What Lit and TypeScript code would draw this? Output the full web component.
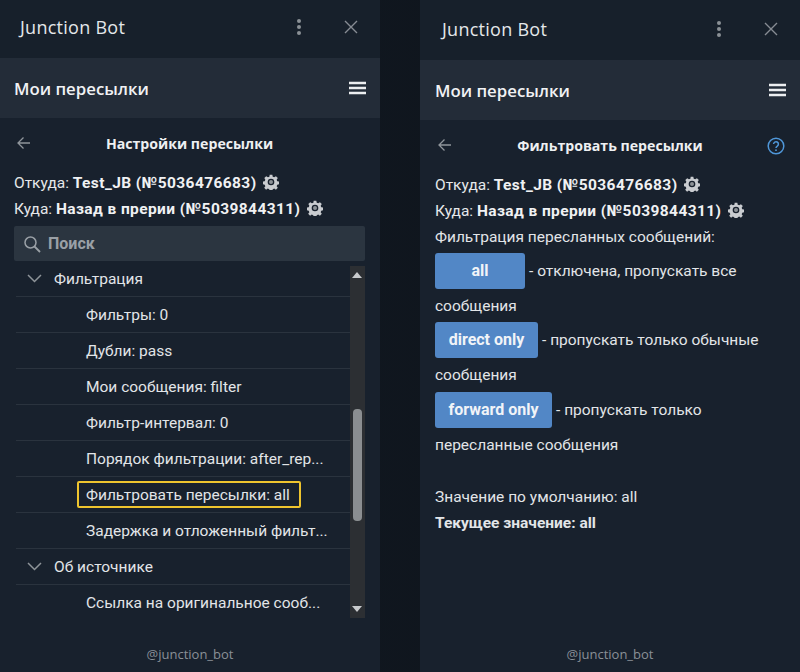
import { LitElement, html, css, svg } from "lit";
import { customElement, property } from "lit/decorators.js";

const gear = svg`<svg class="gear" width="16" height="16" viewBox="0 0 24 24"><path fill="#c9ccd0" fill-rule="evenodd" d="M10 1h4l.6 3 2.2.9 2.6-1.7 2.8 2.8-1.7 2.6.9 2.2 3 .6v4l-3 .6-.9 2.2 1.7 2.6-2.8 2.8-2.6-1.7-2.2.9-.6 3h-4l-.6-3-2.2-.9-2.6 1.7-2.8-2.8 1.7-2.6-.9-2.2-3-.6v-4l3-.6.9-2.2L2 6l2.800-2.800 2.600 1.700 2.200-.9zM12 7a5 5 0 1 0 0 10 5 5 0 0 0 0-10z"/><circle cx="12" cy="12" r="3" fill="#8d9297"/></svg>`;

@customElement("bot-panel")
class BotPanel extends LitElement {
  @property({ type: Boolean, reflect: true }) shifted = false;
  @property() heading = "";
  @property({ type: Boolean }) help = false;

  static styles = css`
    :host { display: flex; flex-direction: column; width: 380px; height: 672px; background: #18212d; color: #e8eaec; font-family: Roboto, sans-serif; font-size: 15.5px; }
    .top { height: 58px; display: flex; align-items: center; padding: 0 20px 4px; box-sizing: border-box; background: #17202b; }
    :host([shifted]) .top { height: 60px; padding: 0 20px 2px 22px; }
    .name { flex: 1; font-family: "Open Sans", sans-serif; font-size: 18px; color: #e4e7ea; letter-spacing: 0.27px; }
    .dots { margin-right: 42px; display: block; }
    .close { margin-right: 2px; display: block; }
    .sub { height: 60px; background: #232c38; display: flex; align-items: center; justify-content: space-between; padding: 0 14px; box-sizing: border-box; font-family: "Open Sans", sans-serif; font-weight: 600; font-size: 16.8px; color: #f1f2f4; }
    :host([shifted]) .sub { padding-left: 15px; }
    .body { flex: 1; padding: 0 15px 0 14px; min-height: 0; display: flex; flex-direction: column; }
    :host([shifted]) .body { padding-left: 15px; }
    .title { height: 52px; display: flex; align-items: center; position: relative; justify-content: center; font-family: "Open Sans", sans-serif; font-weight: 700; font-size: 14.15px; color: #eef0f2; padding-bottom: 1px; box-sizing: border-box; }
    .title .back { position: absolute; left: 3px; top: 18px; }
    .title .q { position: absolute; right: 0; top: 17px; }
    .foot { height: 36px; text-align: center; font-family: "Open Sans", sans-serif; font-size: 13px; color: #8a9097; padding-top: 9px; box-sizing: border-box; }
  `;

  render() {
    return html`
      <div class="top">
        <span class="name">Junction Bot</span>
        <svg class="dots" width="6" height="18" viewBox="0 0 6 18"><circle cx="3" cy="3" r="2" fill="#8b9096"/><circle cx="3" cy="9" r="2" fill="#8b9096"/><circle cx="3" cy="15" r="2" fill="#8b9096"/></svg>
        <svg class="close" width="14" height="14" viewBox="0 0 14 14"><path d="M1 1l12 12M13 1L1 13" stroke="#878c93" stroke-width="1.4" fill="none"/></svg>
      </div>
      <div class="sub">
        <span>Мои пересылки</span>
        <svg width="17" height="14" viewBox="0 0 17 14"><path d="M0 2h17M0 7h17M0 12h17" stroke="#eceef0" stroke-width="2.400"/></svg>
      </div>
      <div class="body">
        <div class="title">
          <svg class="back" width="13" height="14" viewBox="0 0 13 14"><path d="M13 7H1M6.500 1.500L1 7l5.500 5.500" stroke="#8f959b" stroke-width="1.300" fill="none"/></svg>
          <span>${this.heading}</span>
          ${this.help ? html`<svg class="q" width="18" height="18" viewBox="0 0 18 18"><circle cx="9" cy="9" r="7.800" stroke="#4f97d9" stroke-width="1.500" fill="none"/><path d="M6.600 7.100a2.400 2.400 0 1 1 3.700 2c-.9.6-1.300 1-1.300 2" stroke="#4f97d9" stroke-width="1.500" fill="none"/><circle cx="9" cy="13.200" r=".9" fill="#4f97d9"/></svg>` : ""}
        </div>
        <slot></slot>
      </div>
      <div class="foot">@junction_bot</div>
    `;
  }
}

@customElement("route-info")
class RouteInfo extends LitElement {
  static styles = css`
    :host { display: block; line-height: 26px; font-size: 15.5px; color: #e6e8ea; }
    b { font-weight: 700; color: #f0f1f3; letter-spacing: 0.4px; }
    .gear { vertical-align: -2px; margin-left: 3px; }
    .row { height: 26px; white-space: nowrap; }
  `;
  render() {
    return html`
      <div class="row">Откуда: <b>Test_JB (№5036476683)</b> ${gear}</div>
      <div class="row">Куда: <b>Назад в прерии (№5039844311)</b> ${gear}</div>
    `;
  }
}

@customElement("app-root")
class AppRoot extends LitElement {
  static styles = css`
    :host { display: flex; justify-content: space-between; width: 800px; height: 672px; background: linear-gradient(90deg, #131b25, #0f151d 60%, #131b25); overflow: hidden; }
    .search { height: 35px; margin-top: 4px; background: #2b3540; border-radius: 2px; display: flex; align-items: center; padding-left: 9px; gap: 7px; font-family: Roboto, sans-serif; font-weight: 700; font-size: 16px; color: #9aa0a6; }
    .listwrap { position: relative; height: 360px; overflow: hidden; }
    .list { width: 335px; margin-left: 2px; }
    .rowi { height: 36px; box-sizing: border-box; border-bottom: 1px solid #2a333e; display: flex; align-items: center; font-size: 15.5px; color: #e2e5e8; white-space: nowrap; }
    .child { padding-left: 70px; }
    .group { padding-left: 11px; }
    .group svg { margin-right: 12px; }
    .sel { border: 2px solid #eec42e; border-radius: 2px; height: 27px; box-sizing: border-box; display: flex; align-items: center; padding: 0 9px 0 7px; margin-left: -9px; }
    .nob { border-bottom: 0; }
    .bar { position: absolute; right: 0; top: 5px; width: 15px; height: 352px; background: #2c2f33; }
    .arr { position: absolute; left: 2px; width: 0; height: 0; border-left: 5.500px solid transparent; border-right: 5.500px solid transparent; }
    .up { top: 6px; border-bottom: 6px solid #c8cacc; }
    .down { bottom: 6px; border-top: 6px solid #c8cacc; }
    .thumb { position: absolute; left: 3px; top: 143px; width: 9px; height: 112px; border-radius: 4px; background: #8b8e91; }
    .text { line-height: 26px; font-size: 15.5px; color: #e2e5e8; font-family: Roboto, sans-serif; }
    .line { height: 26px; white-space: nowrap; }
    .lead { height: 25px; }
    .entry { padding-top: 3.500px; }
    .btnrow { height: 36px; display: flex; align-items: center; gap: 4px; white-space: nowrap; margin-bottom: 4px; }
    .btn { height: 36px; box-sizing: border-box; background: #5287c6; border-radius: 3px; color: #f1f4f8; font-weight: 700; font-size: 16px; display: flex; align-items: center; justify-content: center; }
    .spacer { height: 26px; }
    b { font-weight: 700; }
  `;

  private chev() {
    return html`<svg width="15" height="9" viewBox="0 0 15 9"><path d="M1 1l6.500 6.500L14 1" stroke="#8e9499" stroke-width="1.500" fill="none"/></svg>`;
  }

  private left() {
    const child = (t: string) => html`<div class="rowi child">${t}</div>`;
    const group = (t: string) => html`<div class="rowi group">${this.chev()}<span>${t}</span></div>`;
    return html`
      <bot-panel heading="Настройки пересылки">
        <route-info></route-info>
        <div class="search">
          <svg width="18" height="18" viewBox="0 0 18 18"><circle cx="7.500" cy="7.500" r="5.500" stroke="#9aa0a6" stroke-width="1.500" fill="none"/><path d="M11.500 11.500l5.500 5.500" stroke="#9aa0a6" stroke-width="1.800"/></svg>
          <span>Поиск</span>
        </div>
        <div class="listwrap">
          <div class="list">
            ${group("Фильтрация")}
            ${child("Фильтры: 0")}
            ${child("Дубли: pass")}
            ${child("Мои сообщения: filter")}
            ${child("Фильтр-интервал: 0")}
            ${child("Порядок фильтрации: after_rep...")}
            <div class="rowi child"><span class="sel">Фильтровать пересылки: all</span></div>
            ${child("Задержка и отложенный фильт...")}
            ${group("Об источнике")}
            <div class="rowi child nob">Ссылка на оригинальное сооб...</div>
          </div>
          <div class="bar"><span class="arr up"></span><div class="thumb"></div><span class="arr down"></span></div>
        </div>
      </bot-panel>
    `;
  }

  private entry(label: string, w: number, text: string, wrap: string) {
    return html`
      <div class="entry">
        <div class="btnrow"><span class="btn" style="width:${w}px">${label}</span><span>${text}</span></div>
        <div class="line">${wrap}</div>
      </div>`;
  }

  private right() {
    return html`
      <bot-panel shifted help heading="Фильтровать пересылки">
        <route-info></route-info>
        <div class="text">
          <div class="line lead">Фильтрация пересланных сообщений:</div>
          ${this.entry("all", 90, "- отключена, пропускать все", "сообщения")}
          ${this.entry("direct only", 103, "- пропускать только обычные", "сообщения")}
          ${this.entry("forward only", 117, "- пропускать только", "пересланные сообщения")}
          <div class="spacer"></div>
          <div class="line">Значение по умолчанию: all</div>
          <div class="line"><b>Текущее значение: all</b></div>
        </div>
      </bot-panel>
    `;
  }

  render() {
    return html`${this.left()}${this.right()}`;
  }
}
